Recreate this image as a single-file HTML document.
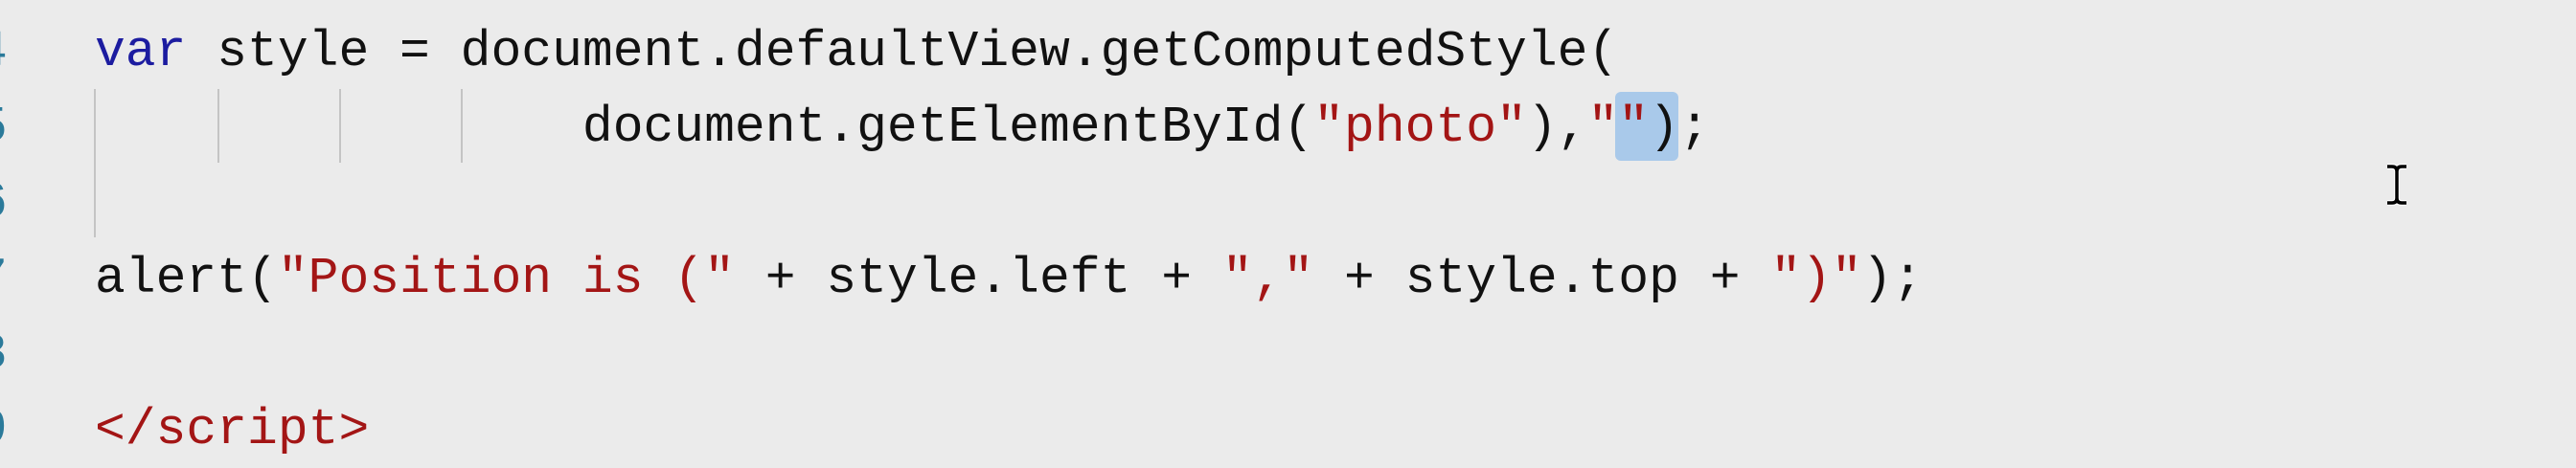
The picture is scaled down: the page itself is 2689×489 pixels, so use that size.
<!DOCTYPE html>
<html><head><meta charset="utf-8"><style>
html,body{margin:0;padding:0;}
body{width:2689px;height:485px;background:#ebebeb;overflow:hidden;position:relative;}
.code{position:absolute;left:99px;top:-64px;font-family:"Liberation Mono",monospace;font-size:53px;line-height:79px;color:#111;white-space:pre;}
.nums{position:absolute;left:-24px;top:-64px;font-family:"Liberation Mono",monospace;font-size:53px;line-height:79px;color:#2b7a9a;white-space:pre;}
.k{color:#1c1ca0}.s{color:#a31515}
.g{position:absolute;width:2px;background:#c4c4c4;}
.sel{position:absolute;left:1686px;top:96px;width:66px;height:72px;background:#a9c9ea;border-radius:6px;}
</style></head><body>
<div class="sel"></div>
<div class="g" style="left:98px;top:93px;height:155px"></div>
<div class="g" style="left:227px;top:93px;height:77px"></div>
<div class="g" style="left:354px;top:93px;height:77px"></div>
<div class="g" style="left:481px;top:93px;height:77px"></div>
<div class="nums">3
4
5
6
7
8
9</div>
<div class="code"><span class="k">var</span> photo = document.getElementById(<span class="s">"photo"</span>);
<span class="k">var</span> style = document.defaultView.getComputedStyle(
                document.getElementById(<span class="s">"photo"</span>),<span class="s">""</span>);

alert(<span class="s">"Position is ("</span> + style.left + <span class="s">","</span> + style.top + <span class="s">")"</span>);

<span class="s">&lt;/script&gt;</span></div>
<svg style="position:absolute;left:2488px;top:170px" width="28" height="46" viewBox="0 0 28 46">
<path d="M4 4 H9 Q14 4 14 9 V37 Q14 42 9 42 H4 M24 4 H19 Q14 4 14 9 M14 37 Q14 42 19 42 H24" fill="none" stroke="#fff" stroke-width="6"/>
<path d="M4 4 H9 Q14 4 14 9 V37 Q14 42 9 42 H4 M24 4 H19 Q14 4 14 9 M14 37 Q14 42 19 42 H24" fill="none" stroke="#000" stroke-width="3.5"/>
</svg>
</body></html>
